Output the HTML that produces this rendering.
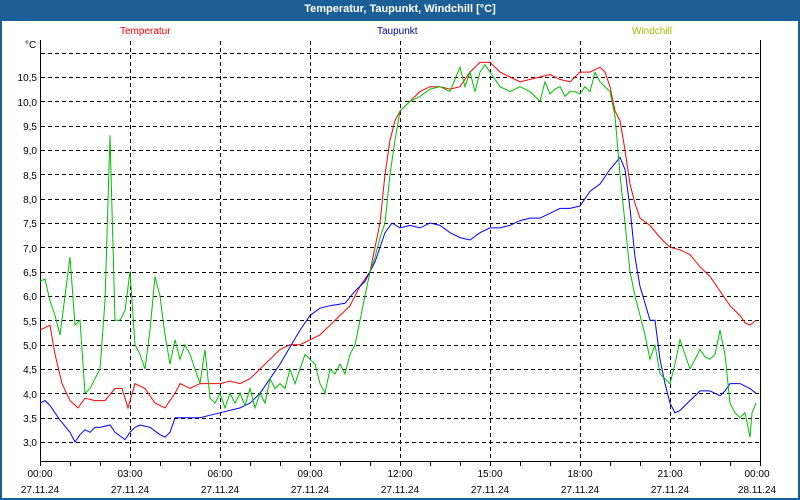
<!DOCTYPE html>
<html><head><meta charset="utf-8"><style>
body{margin:0;width:800px;height:500px;background:#1c5f97;font-family:"Liberation Sans",sans-serif;overflow:hidden}
#t{position:absolute;left:0;top:0;width:800px;height:21px;color:#fff;font-weight:bold;font-size:11px;text-align:center;line-height:19px}
#w{position:absolute;left:2px;top:21px;width:796px;height:477px;background:#fff}
svg{position:absolute;left:0;top:0}
text{font-family:"Liberation Sans",sans-serif;font-size:10px}
</style></head><body>
<div id="t">Temperatur, Taupunkt, Windchill [°C]</div>
<div id="w"></div>
<svg width="800" height="500" id="s">
<text x="120" y="34" fill="#ff0000" font-size="9.5">Temperatur</text>
<text x="377" y="34" fill="#0000a0" font-size="9.5">Taupunkt</text>
<text x="632" y="34" fill="#a0c000" font-size="9.5">Windchill</text>
<text x="25" y="48">°C</text>
<g text-anchor="end" font-size="10">
<text x="37" y="81">10,5</text><text x="37" y="106">10,0</text><text x="37" y="130">9,5</text><text x="37" y="154">9,0</text><text x="37" y="179">8,5</text><text x="37" y="203">8,0</text><text x="37" y="227">7,5</text><text x="37" y="252">7,0</text><text x="37" y="276">6,5</text><text x="37" y="300">6,0</text><text x="37" y="325">5,5</text><text x="37" y="349">5,0</text><text x="37" y="373">4,5</text><text x="37" y="398">4,0</text><text x="37" y="422">3,5</text><text x="37" y="446">3,0</text>
</g>
<g text-anchor="middle" font-size="10">
<text x="40" y="477">00:00</text><text x="40" y="493">27.11.24</text>
<text x="130" y="477">03:00</text><text x="130" y="493">27.11.24</text>
<text x="220" y="477">06:00</text><text x="220" y="493">27.11.24</text>
<text x="310" y="477">09:00</text><text x="310" y="493">27.11.24</text>
<text x="400" y="477">12:00</text><text x="400" y="493">27.11.24</text>
<text x="490" y="477">15:00</text><text x="490" y="493">27.11.24</text>
<text x="580" y="477">18:00</text><text x="580" y="493">27.11.24</text>
<text x="670" y="477">21:00</text><text x="670" y="493">27.11.24</text>
<text x="757" y="477">00:00</text><text x="757" y="493">28.11.24</text>
</g>
<g id="grid" stroke="#000" stroke-dasharray="4,3" stroke-width="1"></g>
<path d="M40.5 40V461.5H760.5V40" fill="none" stroke="#000"/>
<g id="ticks" stroke="#000"></g>
<polyline id="r" fill="none" stroke="#ff0000"/>
<polyline id="b" fill="none" stroke="#0000ff"/>
<polyline id="g" fill="none" stroke="#00c000"/>
</svg>
<script>
var N="http://www.w3.org/2000/svg";
function Y(v){return 442-(v-3)*48.67}
var g=document.getElementById('grid');
for(var v=3;v<=11.01;v+=0.5){var l=document.createElementNS(N,'line');var y=Math.round(Y(v))+0.5;l.setAttribute('x1',41);l.setAttribute('x2',760);l.setAttribute('y1',y);l.setAttribute('y2',y);g.appendChild(l);}
for(var x=130;x<760;x+=90){var l=document.createElementNS(N,'line');l.setAttribute('x1',x+.5);l.setAttribute('x2',x+.5);l.setAttribute('y1',41);l.setAttribute('y2',461);g.appendChild(l);}
var t=document.getElementById('ticks');
for(var x=40;x<=760;x+=30){var l=document.createElementNS(N,'line');l.setAttribute('x1',x+.5);l.setAttribute('x2',x+.5);l.setAttribute('y1',461);l.setAttribute('y2',466);t.appendChild(l);}
function P(id,a){var s=[];for(var i=0;i<a.length;i+=2)s.push(a[i]+','+Y(a[i+1]).toFixed(1));document.getElementById(id).setAttribute('points',s.join(' '));}
P('r',[40,5.3,50,5.4,55,4.8,62,4.2,70,3.85,78,3.7,85,3.9,95,3.85,105,3.85,115,4.1,122,4.1,128,3.7,135,4.2,145,4.1,155,3.8,165,3.7,175,4.0,180,4.2,190,4.1,200,4.2,210,4.2,220,4.2,230,4.25,240,4.2,250,4.3,260,4.5,270,4.7,280,4.9,290,5.0,300,5.0,310,5.1,320,5.2,330,5.4,340,5.6,350,5.8,360,6.2,370,6.5,375,7.0,380,7.5,385,8.5,390,9.2,395,9.6,400,9.8,410,10.0,420,10.2,430,10.3,440,10.3,450,10.25,460,10.3,470,10.6,480,10.8,490,10.8,500,10.6,510,10.5,520,10.4,530,10.45,540,10.5,550,10.55,560,10.45,570,10.4,580,10.6,590,10.6,600,10.7,605,10.6,610,10.3,615,9.8,620,9.6,625,9.0,630,8.3,635,7.9,640,7.6,650,7.45,660,7.2,670,7.0,680,6.95,690,6.85,700,6.6,710,6.4,720,6.1,730,5.8,740,5.6,745,5.45,750,5.4,756,5.5]);
P('b',[40,3.8,45,3.85,50,3.75,55,3.6,60,3.45,70,3.2,75,3.0,80,3.15,85,3.25,90,3.2,95,3.3,100,3.3,110,3.35,115,3.2,125,3.05,130,3.2,135,3.3,140,3.35,150,3.3,160,3.15,165,3.1,170,3.2,175,3.5,180,3.5,200,3.5,210,3.55,220,3.6,240,3.7,250,3.8,260,4.0,270,4.3,280,4.6,290,4.95,300,5.3,310,5.6,320,5.75,330,5.8,345,5.85,355,6.1,365,6.3,375,6.7,385,7.3,392,7.5,400,7.4,410,7.45,420,7.4,430,7.5,440,7.45,450,7.3,460,7.2,470,7.15,480,7.3,490,7.4,500,7.4,510,7.45,520,7.55,530,7.6,540,7.6,550,7.7,560,7.8,570,7.8,580,7.85,590,8.15,600,8.3,610,8.6,620,8.85,625,8.6,630,7.8,635,6.8,640,6.2,650,5.5,655,5.5,660,4.7,665,4.2,670,3.8,675,3.6,680,3.65,690,3.85,700,4.05,710,4.05,720,3.95,725,4.05,730,4.2,740,4.2,750,4.1,756,4.0]);
P('g',[40,6.3,45,6.35,50,5.9,55,5.6,60,5.2,65,6.0,70,6.8,75,5.4,80,5.5,85,4.0,90,4.1,95,4.3,100,4.5,105,5.9,110,9.3,115,5.5,120,5.5,125,5.7,130,6.5,135,5.0,140,4.8,145,4.5,150,5.3,155,6.4,160,6.0,165,5.2,170,4.6,175,5.1,180,4.7,185,5.0,190,4.8,195,4.5,200,4.2,205,4.9,210,3.9,215,3.8,220,4.0,225,3.7,230,4.0,235,3.8,240,4.0,245,3.75,250,4.1,255,3.7,260,4.0,265,3.8,270,4.3,275,4.1,280,4.2,285,4.1,290,4.5,295,4.2,300,4.5,305,4.8,310,4.7,315,4.6,320,4.2,325,4.0,330,4.5,335,4.4,340,4.6,345,4.4,350,4.8,355,5.0,360,5.5,365,6.0,370,6.5,375,6.8,380,7.2,385,7.5,390,8.5,395,9.2,400,9.8,410,10.0,420,10.1,430,10.25,440,10.3,450,10.2,460,10.7,465,10.3,470,10.6,475,10.2,480,10.6,485,10.75,490,10.6,500,10.3,510,10.2,520,10.3,530,10.2,540,10.0,545,10.4,550,10.15,555,10.25,560,10.3,565,10.1,570,10.2,575,10.2,580,10.15,585,10.3,590,10.2,595,10.6,600,10.4,605,10.3,610,10.2,615,9.7,620,8.5,625,7.5,630,6.5,635,6.0,640,5.6,645,5.2,650,4.7,655,5.0,660,4.4,665,4.3,670,4.2,675,4.6,680,5.1,685,4.8,690,4.5,695,4.7,700,4.9,705,4.75,710,4.7,715,4.8,720,5.3,725,4.8,730,3.8,735,3.6,740,3.5,745,3.6,750,3.1,752,3.6,756,3.8]);
</script>
</body></html>
